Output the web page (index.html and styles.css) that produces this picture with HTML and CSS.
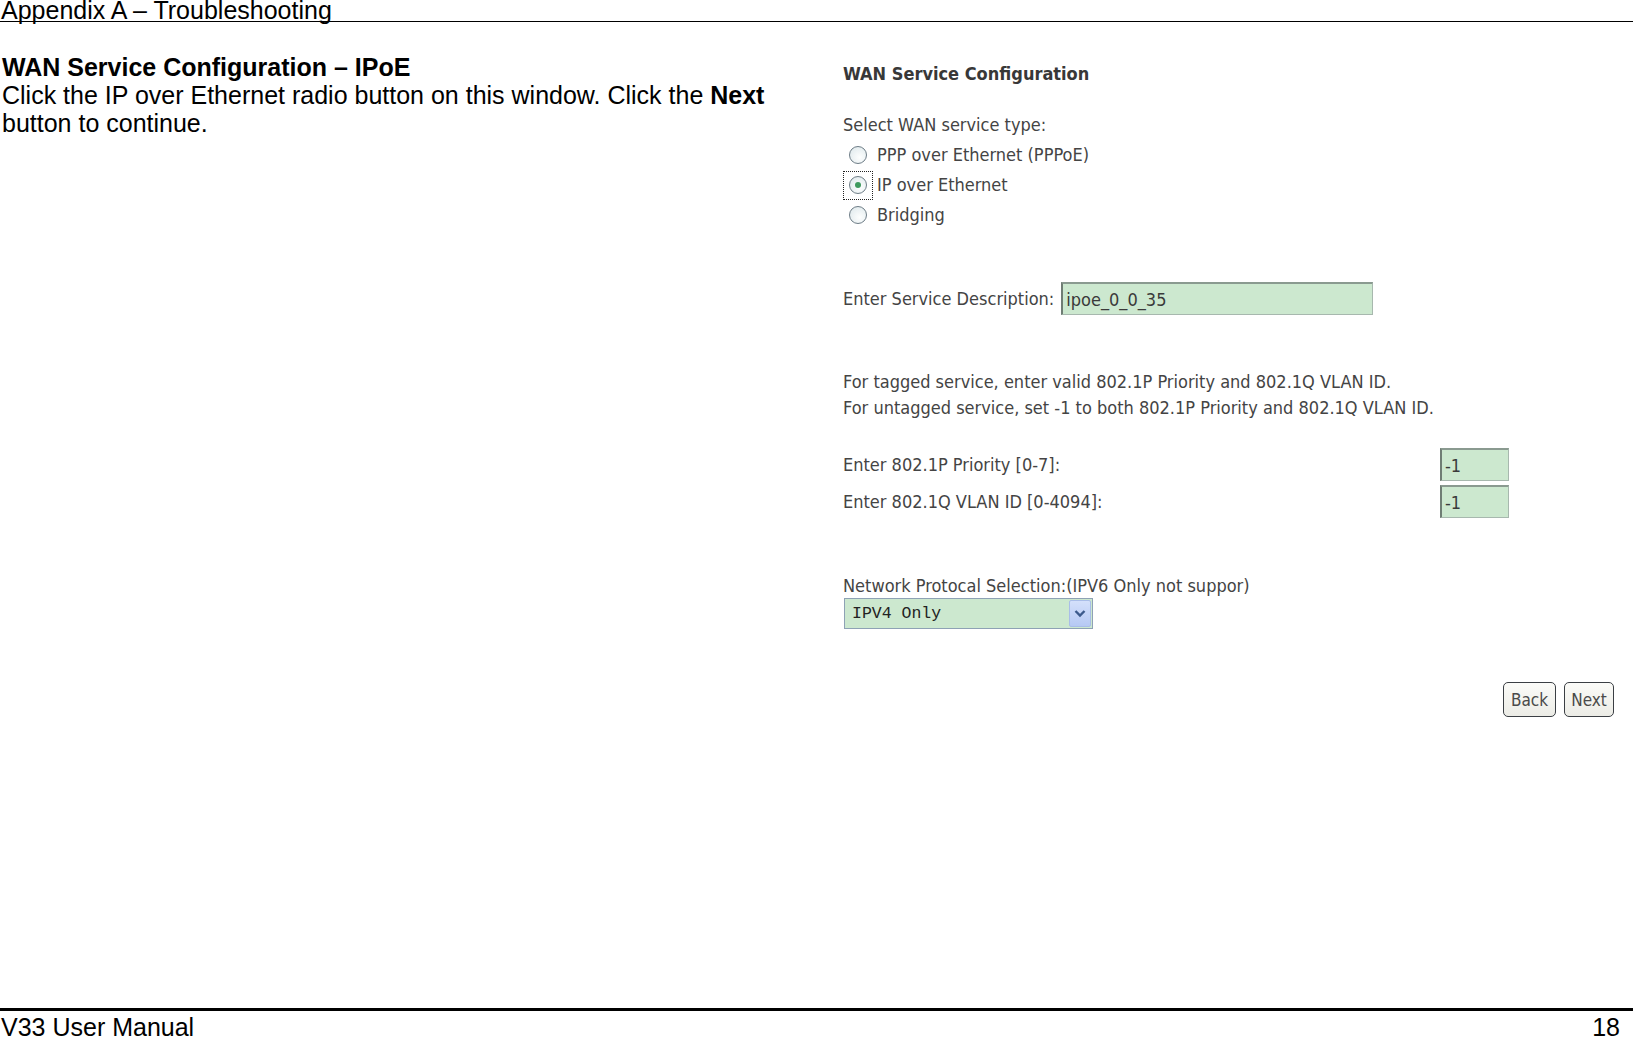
FILE: index.html
```html
<!DOCTYPE html>
<html lang="en">
<head>
<meta charset="utf-8">
<title>Appendix A – Troubleshooting</title>
<link rel="stylesheet" href="styles.css">
</head>
<body>
<header class="page-header"><span>Appendix A – Troubleshooting</span></header>
<main class="content">
  <section class="intro">
    <h2 class="intro-title">WAN Service Configuration – IPoE</h2>
    <p class="intro-text">Click the IP over Ethernet radio button on this window. Click the <b>Next</b> button to continue.</p>
  </section>
  <section class="shot">
    <div class="shot-title">WAN Service Configuration</div>
    <div class="shot-label">Select WAN service type:</div>
    <div class="radio-list">
      <div class="radio-row"><span class="radio-box"><span class="radio"></span></span><span class="radio-text">PPP over Ethernet (PPPoE)</span></div>
      <div class="radio-row"><span class="radio-box focus"><span class="radio checked"></span></span><span class="radio-text">IP over Ethernet</span></div>
      <div class="radio-row"><span class="radio-box"><span class="radio"></span></span><span class="radio-text">Bridging</span></div>
    </div>
    <div class="desc-row">
      <span class="shot-text">Enter Service Description:</span>
      <span class="field field-desc">ipoe_0_0_35</span>
    </div>
    <div class="note">
      <div>For tagged service, enter valid 802.1P Priority and 802.1Q VLAN ID.</div>
      <div>For untagged service, set -1 to both 802.1P Priority and 802.1Q VLAN ID.</div>
    </div>
    <div class="vlan-grid">
      <span class="shot-text">Enter 802.1P Priority [0-7]:</span>
      <span class="field field-small">-1</span>
      <span class="shot-text">Enter 802.1Q VLAN ID [0-4094]:</span>
      <span class="field field-small">-1</span>
    </div>
    <div class="shot-label proto-label">Network Protocal Selection:(IPV6 Only not suppor)</div>
    <div class="select">
      <span class="select-value">IPV4 Only</span>
      <span class="select-arrow"><svg width="12" height="9" viewBox="0 0 12 9"><path d="M1.5 2 L6 6.5 L10.5 2" fill="none" stroke="#3c5a8c" stroke-width="2.4"/></svg></span>
    </div>
    <div class="buttons">
      <span class="btn btn-back">Back</span>
      <span class="btn btn-next">Next</span>
    </div>
  </section>
</main>
<footer class="page-footer">
  <span>V33 User Manual</span>
  <span>18</span>
</footer>
</body>
</html>
```

FILE: styles.css
```css
html, body {
  margin: 0;
  padding: 0;
  background: #fff;
}
body {
  width: 1633px;
  height: 1039px;
  overflow: hidden;
  display: flex;
  flex-direction: column;
  font-family: "Liberation Sans", Arial, sans-serif;
  color: #000;
}
.page-header {
  font-size: 25px;
  line-height: 21px;
  height: 21px;
  padding: 0 0 0 1px;
  border-bottom: 1px solid #000;
  white-space: nowrap;
}
.content {
  flex: 1;
  display: flex;
}
.intro {
  width: 798px;
  padding-left: 2px;
  flex-shrink: 0;
}
.intro-title {
  margin: 31px 0 0;
  font-size: 25px;
  line-height: 28px;
  font-weight: bold;
}
.intro-text {
  margin: 0;
  font-size: 25px;
  line-height: 28px;
}
.shot {
  flex: 1;
  padding: 42px 19px 0 43px;
  font-family: "DejaVu Sans Condensed", "DejaVu Sans", sans-serif;
  font-stretch: condensed;
  font-size: 18px;
  color: #444;
  display: flex;
  flex-direction: column;
  align-items: flex-start;
}
.shot-title {
  font-weight: bold;
  font-size: 18px;
  line-height: 20px;
  color: #383838;
}
.shot-label {
  margin-top: 31px;
  line-height: 20px;
}
.radio-list {
  margin-top: 5px;
  display: flex;
  flex-direction: column;
}
.radio-row {
  height: 30px;
  display: flex;
  align-items: center;
}
.radio-box {
  width: 30px;
  height: 29px;
  box-sizing: border-box;
  display: flex;
  align-items: center;
  justify-content: center;
  border: 1px dotted transparent;
}
.radio-box.focus {
  border-color: #222;
}
.radio {
  width: 18px;
  height: 18px;
  box-sizing: border-box;
  border-radius: 50%;
  border: 1.5px solid #6d7c86;
  background: radial-gradient(circle at 60% 65%, #fdfefe 0%, #e6eef0 70%, #d4dee2 100%);
  position: relative;
}
.radio.checked::after {
  content: "";
  position: absolute;
  left: 50%;
  top: 50%;
  width: 6px;
  height: 6px;
  margin: -3px 0 0 -3px;
  border-radius: 50%;
  background: #3f9a5e;
}
.radio-text {
  margin-left: 4px;
  line-height: 20px;
}
.desc-row {
  margin-top: 52px;
  display: flex;
  align-items: center;
  gap: 7px;
}
.field {
  box-sizing: border-box;
  height: 33px;
  background: #cce8cf;
  border: 1px solid #a7b8ae;
  border-left: 2px solid #6f7d74;
  border-top: 2px solid #8a9a90;
  display: flex;
  align-items: center;
  padding-left: 3px;
  color: #3a3a3a;
}
.field-desc {
  width: 312px;
}
.note {
  margin-top: 54px;
  line-height: 26px;
}
.vlan-grid {
  margin-top: 27px;
  display: grid;
  grid-template-columns: 597px 69px;
  grid-auto-rows: 33px;
  row-gap: 4px;
  align-items: center;
}
.field-small {
  width: 69px;
}
.proto-label {
  margin-top: 58px;
}
.select {
  margin-top: 2px;
  margin-left: 1px;
  width: 249px;
  height: 31px;
  box-sizing: border-box;
  border: 1px solid #8ea2b5;
  background: #cce8cf;
  display: flex;
  align-items: stretch;
}
.select-value {
  flex: 1;
  font-family: "Liberation Mono", "Courier New", monospace;
  font-size: 16.5px;
  color: #222;
  display: flex;
  align-items: center;
  padding-left: 7px;
}
.select-arrow {
  width: 20px;
  margin: 1px;
  background: linear-gradient(#d4e0fb, #b6c9f4);
  border: 1px solid #a9bde8;
  border-radius: 2px;
  display: flex;
  align-items: center;
  justify-content: center;
}
.buttons {
  align-self: flex-end;
  margin-top: 53px;
  display: flex;
  gap: 8px;
}
.btn {
  height: 35px;
  box-sizing: border-box;
  border: 1.5px solid #3b3f44;
  border-radius: 5px;
  background: linear-gradient(#fbfbf8, #ecece6);
  color: #4a4a4a;
  display: flex;
  align-items: center;
  justify-content: center;
  font-size: 17px;
}
.btn-back { width: 53px; }
.btn-next { width: 50px; }
.page-footer {
  box-sizing: border-box;
  height: 31px;
  flex-shrink: 0;
  border-top: 3px solid #000;
  padding: 3px 13px 0 1px;
  font-size: 25px;
  line-height: 27px;
  display: flex;
  justify-content: space-between;
}
```
